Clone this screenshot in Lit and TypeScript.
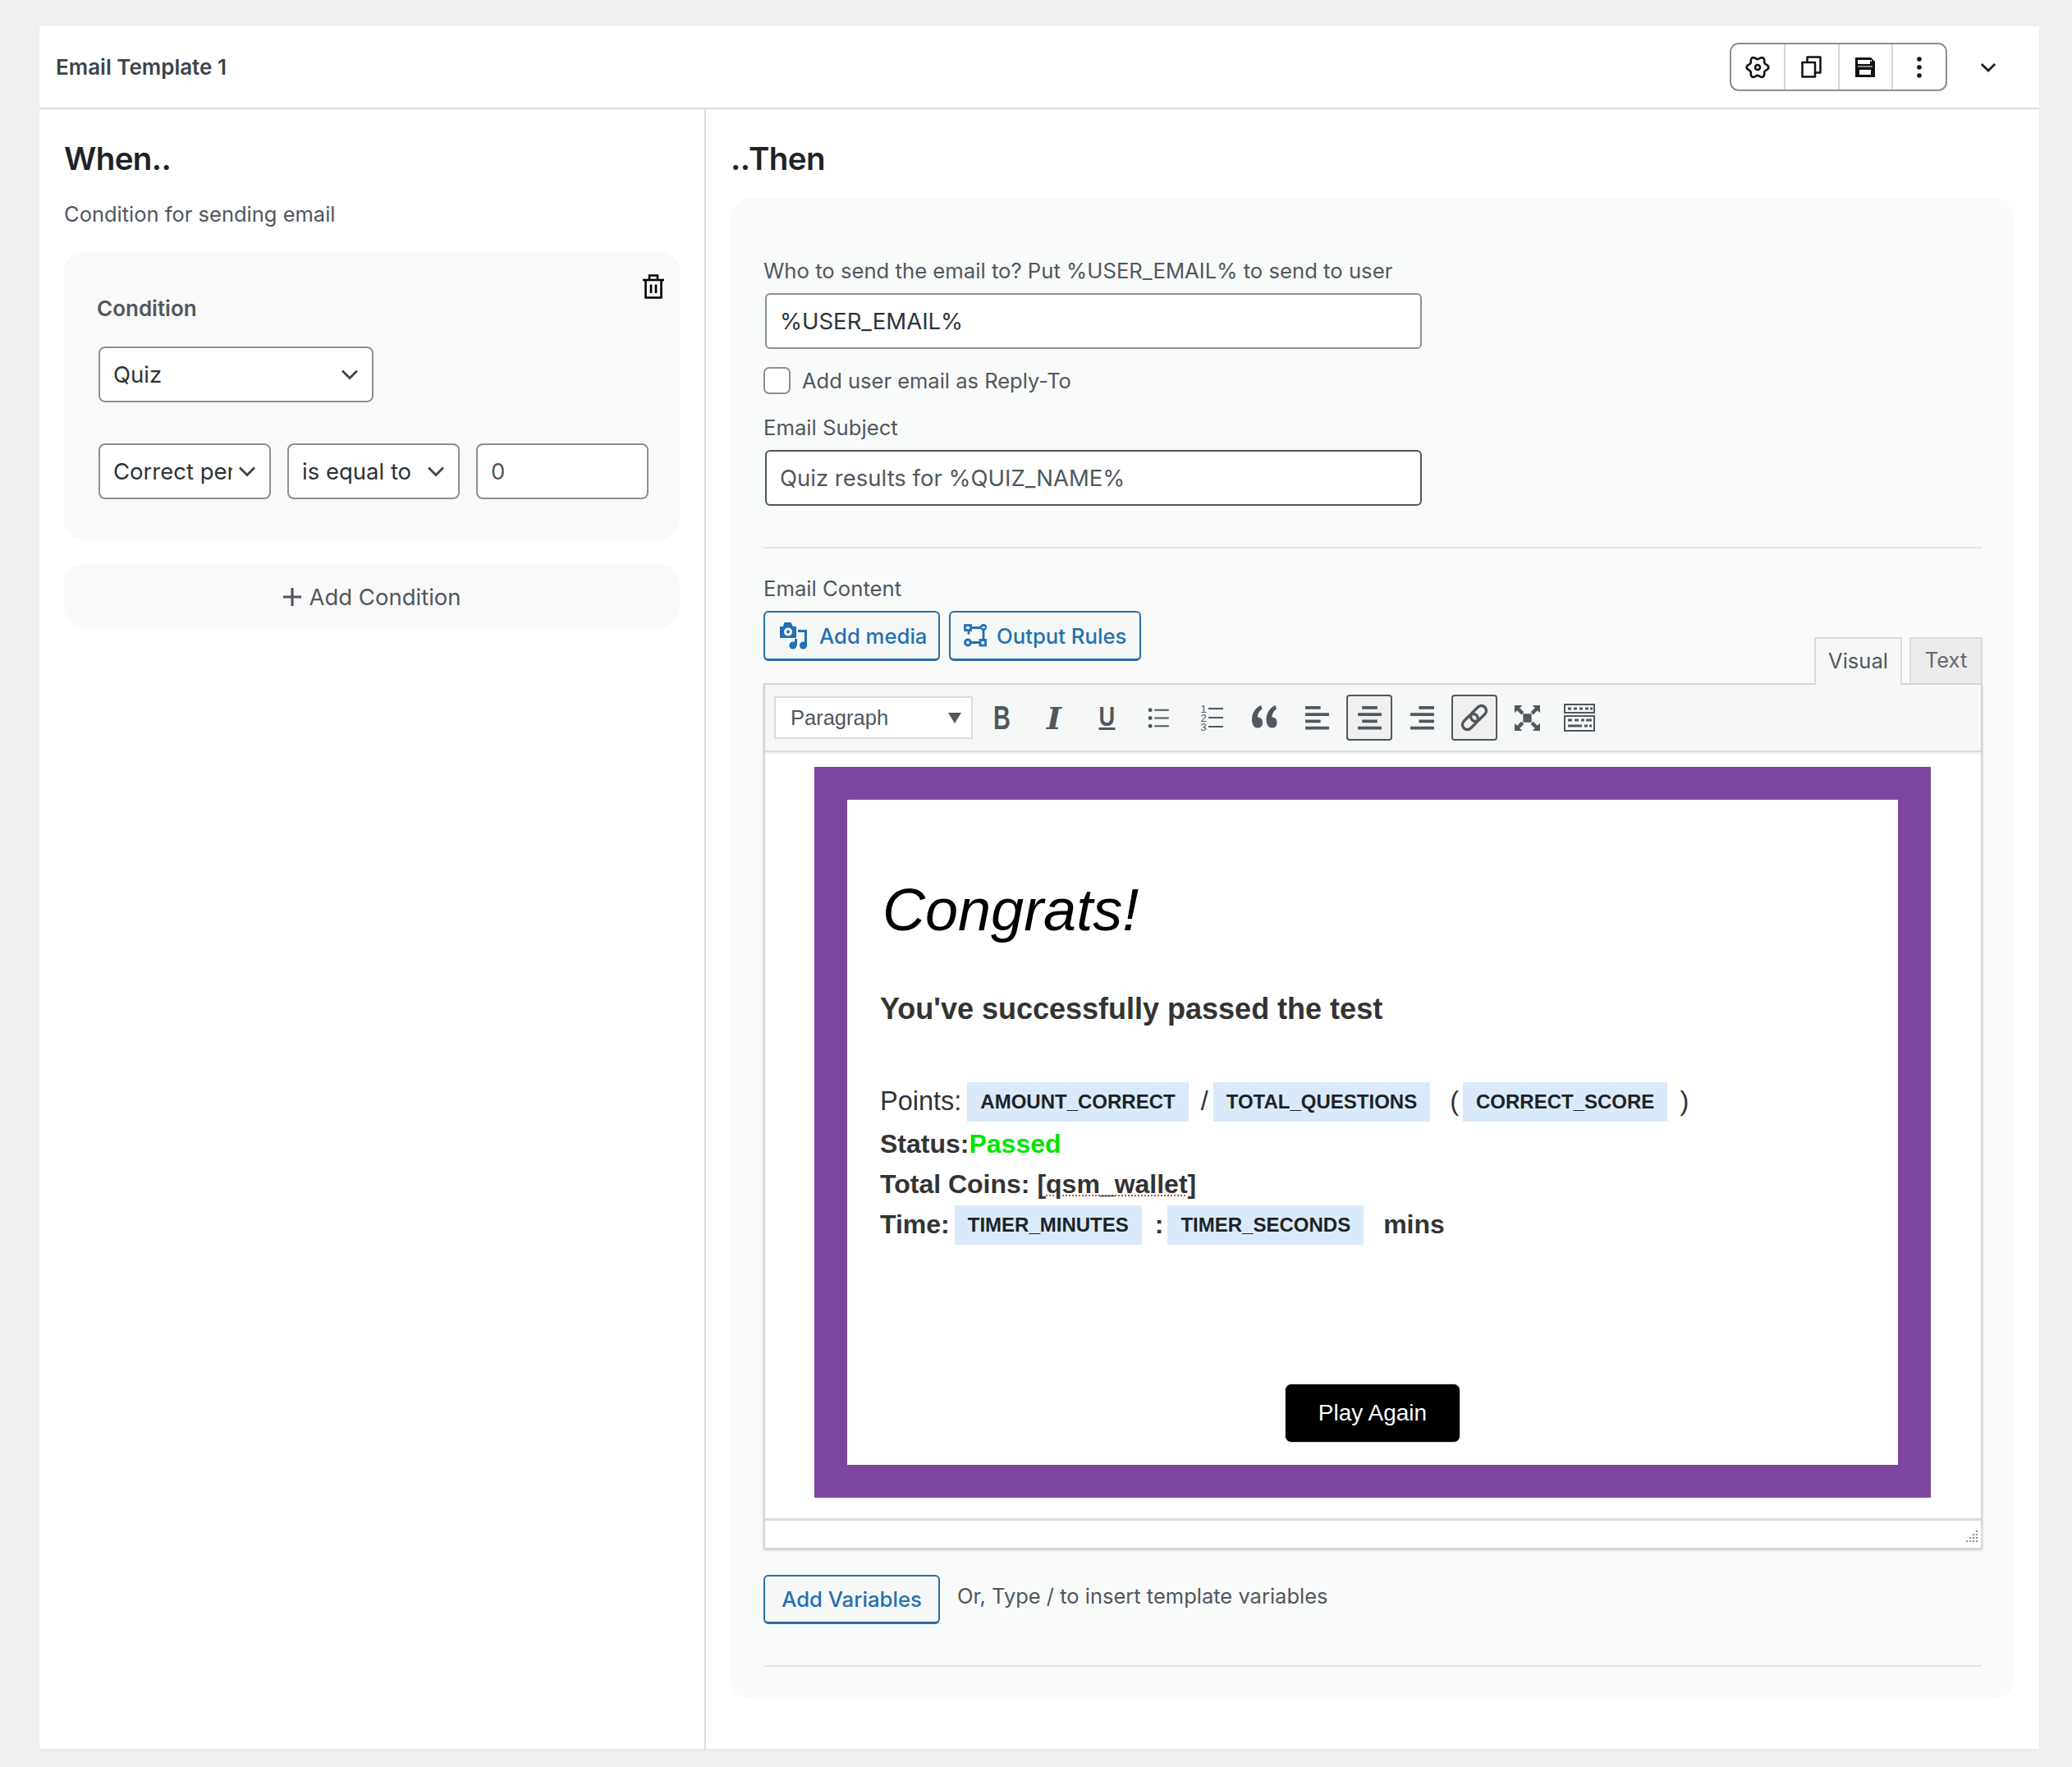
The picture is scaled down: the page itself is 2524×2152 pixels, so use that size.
import { LitElement, html, css, svg } from "lit";
import { customElement } from "lit/decorators.js";

const chev = html`<svg class="chev" viewBox="0 0 24 24" width="36" height="36" fill="none" stroke="#3c434a" stroke-width="1.800"><path d="M6 9l6 6 6-6"/></svg>`;
const T = "#50575e";

const ico = (p: unknown, size = 33) => html`<svg class="ti" viewBox="0 0 32 32" width="${size}" height="${size}" fill="${T}">${p}</svg>`;

const gearPath = (() => {
  const pts: string[] = [];
  for (let i = 0; i < 120; i++) {
    const a = (i / 120) * Math.PI * 2;
    const r = 11.6 + 1.7 * Math.cos(6 * a);
    pts.push(`${(15 + r * Math.cos(a)).toFixed(2)} ${(15 + r * Math.sin(a)).toFixed(2)}`);
  }
  return "M" + pts.join("L") + "Z";
})();

@customElement("app-root")
export class AppRoot extends LitElement {
  static styles = css`
    :host { display: block; width: 2524px; height: 2152px; box-sizing: border-box; background: #f0f0f1; padding: 32px 40px 22px 48px; font-family: Inter, "Liberation Sans", sans-serif; color: #50575e; }
    * { box-sizing: border-box; }
    .card { background: #fff; height: 100%; display: flex; flex-direction: column; box-shadow: 0 1px 2px rgba(0,0,0,.05); }
    .head { height: 101px; flex: none; border-bottom: 2px solid #e2dcdf; display: flex; align-items: center; padding: 0 48px 0 20px; }
    .title { font-size: 26px; font-weight: 600; color: #3c434a; flex: 1; }
    .group { display: flex; width: 265px; height: 59px; border: 2px solid #8c8f94; border-radius: 11px; }
    .group div { flex: 1; display: flex; align-items: center; justify-content: center; border-left: 2px solid #d5d5d7; }
    .group div:first-child { border-left: 0; }
    .head > .chev { margin-left: 36px; }
    .body { flex: 1; display: grid; grid-template-columns: 812px 1fr; min-height: 0; }
    .left { border-right: 2px solid #dcdcde; padding: 0 30px 0 30px; }
    .right { padding: 0 31px 0 30px; }
    h2 { margin: 37px 0 0; height: 46px; line-height: 46px; font-size: 38.5px; font-weight: 600; color: #1d2327; letter-spacing: -.6px; }
    .sub { margin-top: 29px; font-size: 25.5px; line-height: 32px; height: 32px; }
    .cond { position: relative; margin-top: 29px; height: 351px; background: #f9f9f9; border-radius: 24px; padding: 54px 37px 0 40px; }
    .trash { position: absolute; right: 19px; top: 28px; }
    .cl { font-size: 26px; font-weight: 600; line-height: 32px; }
    .sel, .inp { height: 68px; border: 2px solid #8c8f94; border-radius: 8px; background: #fff; display: flex; align-items: center; padding-left: 16px; font-size: 27.5px; color: #2c3338; }
    .sel .v { flex: 1; overflow: hidden; white-space: nowrap; min-width: 0; }
    .sel .chev { flex: none; margin: 0 9px 0 0; }
    .quiz { width: 335px; margin: 30px 0 0 2px; }
    .row3 { display: flex; gap: 20px; margin: 50px 0 0 2px; }
    .row3 > * { width: 210px; }
    .row3 .inp { color: #50575e; }
    .add { margin-top: 30px; height: 77px; padding-top: 2px; background: #f9f9f9; border-radius: 24px; display: flex; align-items: center; justify-content: center; gap: 8px; font-size: 27.5px; }
    .panel { margin-top: 25px; height: 1828px; background: #f9fafa; border-radius: 24px; padding: 73px 38px 0 40px; }
    .lab { font-size: 25.7px; line-height: 32px; height: 32px; }
    .field { display: flex; align-items: center; width: 800px; height: 68px; margin: 11px 0 0 2px; background: #fff; border: 2px solid #8c8f94; border-radius: 6px; padding-left: 16px; font-size: 27.5px; color: #2c3338; }
    .field.dark { border-color: #50575e; color: #50575e; margin-top: 11px; }
    .chk { display: flex; align-items: center; gap: 14px; margin-top: 21px; height: 34px; font-size: 25.5px; }
    .box { width: 33px; height: 33px; border: 2px solid #8c8f94; border-radius: 7px; background: #fff; }
    .l2 { margin-top: 25px; }
    hr { border: 0; height: 2px; background: #e4e5e6; margin: 0; }
    .r1 { margin-top: 50px; margin-right: 1px; }
    .l3 { margin-top: 33px; }
    .btn { display: inline-flex; align-items: center; height: 61px; border: 2px solid #2b6ea5; border-bottom-width: 3px; border-radius: 6px; background: #f6f7f7; color: #2271b1; font-size: 25.7px; font-weight: 500; }
    .btns { display: flex; gap: 11px; margin-top: 11px; height: 61px; }
    .b1 { width: 215px; padding-left: 18px; gap: 15px; }
    .b2 { width: 234px; padding-left: 16px; gap: 12px; }
    .tabs { display: flex; justify-content: flex-end; gap: 9px; margin-top: -29px; height: 56px; position: relative; z-index: 1; }
    .tab { display: flex; align-items: center; justify-content: center; height: 56px; padding-bottom: 3px; font-size: 25.5px; border: 2px solid #dcdcde; border-bottom: 0; background: #ebecec; color: #646970; }
    .tab.on { width: 107px; background: #f6f7f7; color: #50575e; margin-bottom: -2px; height: 58px; }
    .tab.off { width: 89px; }
    .ed { border: 2px solid #d5d6d8; border-bottom: 0; background: #fff; box-shadow: 0 3px 3px rgba(0,0,0,.18); width: 100%; height: 1053px; display: flex; flex-direction: column; }
    .tb { height: 82px; flex: none; background: #f6f7f7; border-bottom: 2px solid #dcdcde; box-shadow: 0 2px 3px rgba(0,0,0,.08); display: flex; align-items: center; padding-left: 11px; position: relative; }
    .para { width: 242px; height: 52px; background: #fff; border: 2px solid #dcdcde; display: flex; align-items: center; padding: 0 12px 0 18px; font-size: 25.5px; color: #50575e; margin-right: 3px; font-family: "Liberation Sans", Arial, sans-serif; }
    .para span { flex: 1; }
    .para i { width: 0; height: 0; border: 8px solid transparent; border-top: 13px solid #50575e; border-bottom: 0; }
    .tis { display: flex; }
    .cell { width: 64px; height: 56px; display: flex; align-items: center; justify-content: center; }
    .cell.act { width: 56px; margin: 0 4px; background: #f0f0f1; border: 2px solid #50575e; border-radius: 4px; }
    .ti { overflow: visible; }
    .gl { color: #50575e; line-height: 1; display: inline-block; }
    .gb { font: 700 40px "Liberation Sans", sans-serif; transform: scaleX(.72); }
    .gi { font: italic 700 38px "DejaVu Serif", serif; }
    .gu { font: 700 34px "Liberation Sans", sans-serif; transform: scaleX(.8); border-bottom: 3px solid #50575e; height: 30px; line-height: 26px; }
    .ol { display: flex; flex-direction: column; font: 500 13px "Liberation Sans", sans-serif; line-height: 11px; color: #50575e; }
    .ol span { display: flex; align-items: center; gap: 2px; }
    .ol b { display: block; width: 18px; height: 2px; background: #50575e; }
    .area { flex: 1; padding: 18px 61px 0 60px; min-height: 0; }
    .purple { border: 40px solid #7e459f; height: 890px; background: #fff; padding: 94px 0 0 40px; font-family: "Liberation Sans", Arial, sans-serif; color: #333; }
    .cg { font-size: 72px; font-style: italic; color: #000; line-height: 80px; margin-left: 3px; }
    .pass { font-size: 36px; font-weight: 700; line-height: 42px; margin-top: 60px; }
    .ln { display: flex; align-items: center; font-size: 32.5px; white-space: pre; }
    .ln.b { font-weight: 700; font-size: 32px; }
    .pts { margin-top: 66px; height: 50px; }
    .st { margin-top: 2px; height: 50px; }
    .tc { height: 48px; margin-top: 0; }
    .tm { height: 50px; }
    .g { color: #00e600; }
    .chip { display: inline-flex; align-items: center; height: 48px; padding: 0 16px; background: #dbeafa; font-size: 24px; font-weight: 700; color: #1d2327; margin-top: 2px; }
    .m8 { margin-left: 7px; } .m6 { margin-left: 6px; } .m5 { margin-left: 5px; }
    .sl { margin: 0 6px 0 15px; } .pl { margin: 0 5px 0 24px; } .pr { margin-left: 15px; }
    .co { margin-left: 16px; } .mi { margin-left: 24px; }
    .sp { text-decoration: underline dotted #e0403f 2px; text-underline-offset: 3px; }
    .play { display: flex; align-items: center; justify-content: center; width: 214px; height: 72px; margin: 169px 0 0 493px; background: #000; color: #fff; border: 1px solid #d8d8d8; border-radius: 8px; font-size: 28px; }
    .status { height: 36px; flex: none; border-top: 3px solid #dcdcde; background: #fff; position: relative; }
    .grip { position: absolute; right: 3px; bottom: 4px; }
    .vars { display: flex; gap: 21px; margin-top: 33px; height: 60px; }
    .b3 { width: 215px; height: 60px; justify-content: center; }
    .hint { font-size: 25.5px; line-height: 32px; margin-top: 10px; }
    .r2 { margin-top: 50px; margin-right: 1px; }
  `;

  render() {
    return html`<div class="card">
      <div class="head">
        <div class="title">Email Template 1</div>
        <div class="group">
          <div><svg width="30" height="30" viewBox="0 0 30 30" fill="none" stroke="#111" stroke-width="2.600" stroke-linejoin="round"><path d="${gearPath}"/><circle cx="15" cy="15" r="3"/></svg></div>
          <div><svg width="25" height="27" viewBox="0 0 25 27" fill="none" stroke="#111" stroke-width="2.500" stroke-linejoin="round"><path d="M1.500 8h15.500v17.500h-15.500z"/><path d="M7.500 7.500v-6h16v19h-6.500"/></svg></div>
          <div><svg width="24" height="24" viewBox="0 0 24 24"><path fill="#111" fill-rule="evenodd" d="M0 0h19l5 5v19h-24zM3 3v5h15v-5l2 3v-3zM3 10.500v1h18v-1zM5 15v6h14v-6z"/></svg></div>
          <div><svg width="8" height="30" viewBox="0 0 8 30" fill="#111"><circle cx="4" cy="5" r="2.800"/><circle cx="4" cy="15" r="2.800"/><circle cx="4" cy="25" r="2.800"/></svg></div>
        </div>
        <svg class="chev" viewBox="0 0 24 24" width="28" height="28" fill="none" stroke="#1d2327" stroke-width="2.400"><path d="M5 8.500l7 7 7-7"/></svg>
      </div>
      <div class="body">
        <div class="left">
          <h2>When..</h2>
          <div class="sub">Condition for sending email</div>
          <div class="cond">
            <svg class="trash" width="26" height="30" viewBox="0 0 26 30" fill="none" stroke="#000" stroke-width="2.600"><path d="M0 7h26M3.500 7v21.500h19v-21.500M8 7v-5.500h10v5.500M10 12.500v10.500M16 12.500v10.500"/></svg>
            <div class="cl">Condition</div>
            <div class="sel quiz"><span class="v">Quiz</span>${chev}</div>
            <div class="row3">
              <div class="sel"><span class="v">Correct percentage</span>${chev}</div>
              <div class="sel"><span class="v">is equal to</span>${chev}</div>
              <div class="inp">0</div>
            </div>
          </div>
          <div class="add"><svg width="24" height="24" viewBox="0 0 24 24" stroke="#50575e" stroke-width="3.200"><path d="M12 1v22M1 12h22"/></svg>Add Condition</div>
        </div>
        <div class="right">
          <h2>..Then</h2>
          <div class="panel">
            <div class="lab">Who to send the email to? Put %USER_EMAIL% to send to user</div>
            <div class="field">%USER_EMAIL%</div>
            <div class="chk"><span class="box"></span>Add user email as Reply-To</div>
            <div class="lab l2">Email Subject</div>
            <div class="field dark">Quiz results for %QUIZ_NAME%</div>
            <hr class="r1" />
            <div class="lab l3">Email Content</div>
            <div class="btns">
              <div class="btn b1"><svg width="33" height="33" viewBox="0 0 33 33" fill="#2271b1"><path fill-rule="evenodd" d="M0 5h4l1-4q.3-1 1-1h7q.7 0 1 1l2 4h4v14h-20zM10 6.500a5 5 0 100 10 5 5 0 000-10z"/><circle cx="10" cy="11.500" r="2"/><path d="M22 9h11v19h-3v-16h-8z"/><circle cx="28.500" cy="28" r="4.500"/><path d="M18 20h3v8h-3z"/><circle cx="16" cy="28" r="4.500"/></svg>Add media</div>
              <div class="btn b2"><svg width="28" height="28" viewBox="0 0 28 28" fill="none" stroke="#2271b1" stroke-width="2.800"><rect x="1.500" y="1.500" width="7" height="6"/><rect x="20" y="19.500" width="6.500" height="6.500"/><circle cx="5" cy="22.500" r="3.500"/><path d="M24 0.500l4 3.500-4 3.500-4-3.500z"/><path d="M8.500 4.500h11.500M24 7.500v12M8.500 22.500h11.500M6 7.500v5"/></svg>Output Rules</div>
            </div>
            <div class="tabs"><div class="tab on">Visual</div><div class="tab off">Text</div></div>
            <div class="ed">
              <div class="tb">
                <div class="para"><span>Paragraph</span><i></i></div>
                <div class="tis">
                  <div class="cell"><span class="gl gb">B</span></div>
                  <div class="cell"><span class="gl gi">I</span></div>
                  <div class="cell"><span class="gl gu">U</span></div>
                  <div class="cell">${ico(svg`<circle cx="5" cy="6.500" r="2.400"/><circle cx="5" cy="16" r="2.400"/><circle cx="5" cy="25.500" r="2.400"/><path d="M10 5.500h17v2h-17zM10 15h17v2h-17zM10 24.500h17v2h-17z"/>`)}</div>
                  <div class="cell"><div class="ol"><span>1<b></b></span><span>2<b></b></span><span>3<b></b></span></div></div>
                  <div class="cell">${ico(svg`<path d="M13 4c-5 2-9 7-9 14 0 4 2 8 5.500 8s5-2.500 5-5.500-2-5-5-5c0-3 1.500-6 4.500-8zM27 4c-5 2-9 7-9 14 0 4 2 8 5.500 8s5-2.500 5-5.500-2-5-5-5c0-3 1.500-6 4.500-8z"/>`, 40)}</div>
                  <div class="cell">${ico(svg`<path d="M2 2h18v3.500h-18zM2 10h28v3.500h-28zM2 18h18v3.500h-18zM2 26h28v3.500h-28z"/>`)}</div>
                  <div class="cell act">${ico(svg`<path d="M7 2h18v3.500h-18zM2 10h28v3.500h-28zM7 18h18v3.500h-18zM2 26h28v3.500h-28z"/>`)}</div>
                  <div class="cell">${ico(svg`<path d="M12 2h18v3.500h-18zM2 10h28v3.500h-28zM12 18h18v3.500h-18zM2 26h28v3.500h-28z"/>`)}</div>
                  <div class="cell act"><svg width="38" height="38" viewBox="0 0 38 38" fill="none" stroke="#50575e" stroke-width="3.400"><rect x="18" y="3" width="12" height="22" rx="6" transform="rotate(45 24 14)"/><rect x="8" y="13" width="12" height="22" rx="6" transform="rotate(45 14 24)"/></svg></div>
                  <div class="cell">${ico(svg`<path d="M11 11h10v10h-10zM1 1h9l-3 3 5 5-3 3-5-5-3 3zM31 1v9l-3-3-5 5-3-3 5-5-3-3zM1 31v-9l3 3 5-5 3 3-5 5 3 3zM31 31h-9l3-3-5-5 3-3 5 5 3-3z"/>`)}</div>
                  <div class="cell"><svg width="38" height="34" viewBox="0 0 38 34" fill="${T}"><path fill-rule="evenodd" d="M0 0h38v12h-38zM2 2v8h34v-8zM0 14h38v20h-38zM2 16v16h34v-16z"/><path d="M5 4.500h4v3h-4zM12 4.500h4v3h-4zM19 4.500h4v3h-4zM26 4.500h4v3h-4zM32 4.500h3v3h-3zM5 18.500h5v3h-5zM13 18.500h5v3h-5zM21 18.500h4v3h-4zM27 18.500h7v3h-7zM5 25.500h17v3h-17zM25 25.500h4v3h-4zM31 25.500h3v3h-3z"/></svg></div>
                </div>
              </div>
              <div class="area">
                <div class="purple">
                  <div class="cg">Congrats!</div>
                  <div class="pass">You've successfully passed the test</div>
                  <div class="ln pts"><span>Points:</span><span class="chip m8">AMOUNT_CORRECT</span><span class="sl">/</span><span class="chip">TOTAL_QUESTIONS</span><span class="pl">(</span><span class="chip">CORRECT_SCORE</span><span class="pr">)</span></div>
                  <div class="ln b st">Status:<span class="g">Passed</span></div>
                  <div class="ln b tc">Total Coins: [<span class="sp">qsm_wallet</span>]</div>
                  <div class="ln b tm"><span>Time:</span><span class="chip m6">TIMER_MINUTES</span><span class="co">:</span><span class="chip m5">TIMER_SECONDS</span><span class="mi">mins</span></div>
                  <div class="play">Play Again</div>
                </div>
              </div>
              <div class="status"><svg class="grip" width="18" height="18" viewBox="0 0 18 18" fill="#8c8f94"><path d="M15 1h2v2h-2zM11 5h2v2h-2zM15 5h2v2h-2zM7 9h2v2h-2zM11 9h2v2h-2zM15 9h2v2h-2zM3 13h2v2h-2zM7 13h2v2h-2zM11 13h2v2h-2zM15 13h2v2h-2z"/></svg></div>
            </div>
            <div class="vars">
              <div class="btn b3">Add Variables</div>
              <div class="hint">Or, Type / to insert template variables</div>
            </div>
            <hr class="r2" />
          </div>
        </div>
      </div>
    </div>`;
  }
}
